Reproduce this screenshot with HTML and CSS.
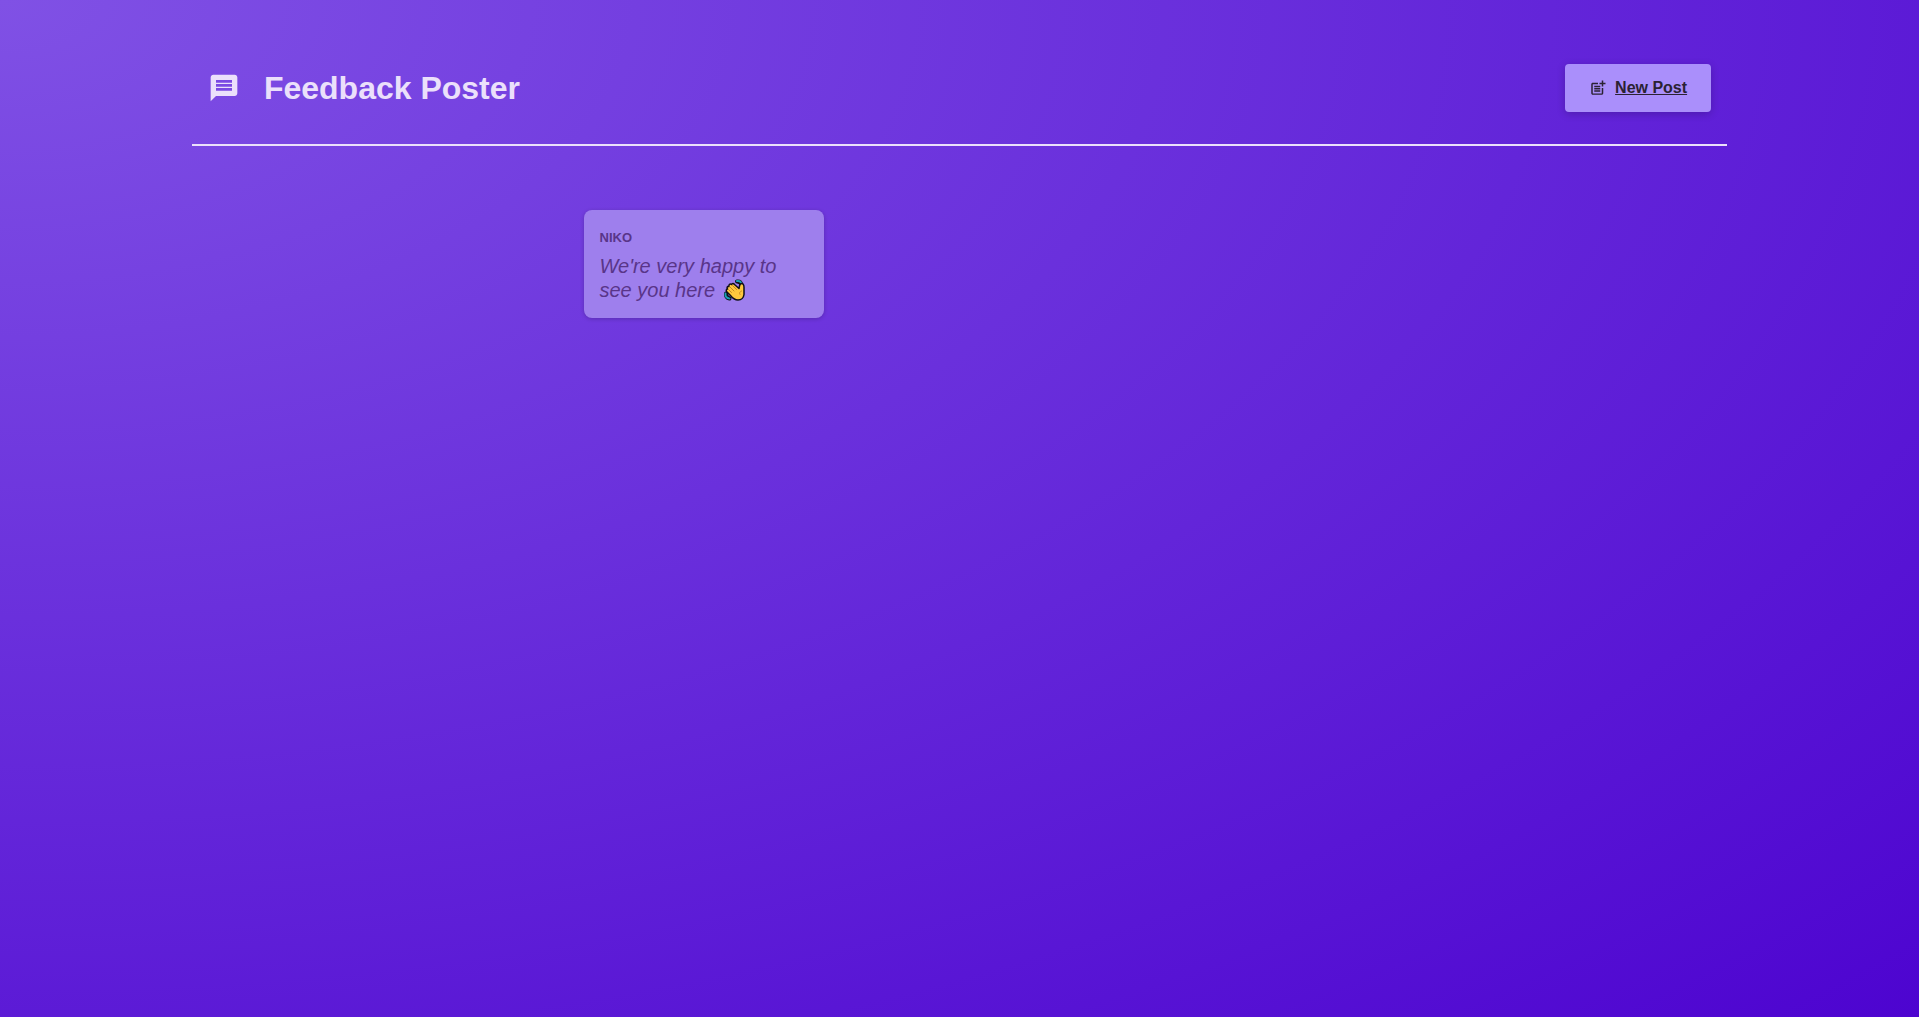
FILE: index.html
```html
<!DOCTYPE html>
<html lang="en">
<head>
<meta charset="utf-8">
<meta name="viewport" content="width=device-width, initial-scale=1">
<title>Feedback Poster</title>
<link rel="stylesheet" href="styles.css">
</head>
<body>
<header class="header">
  <h1 class="logo">
    <svg class="logo-icon" viewBox="0 0 24 24" aria-hidden="true"><path d="M20 2H4c-1.1 0-1.99.9-1.99 2L2 22l4-4h14c1.1 0 2-.9 2-2V4c0-1.1-.9-2-2-2zm-2 12H6v-2h12v2zm0-3H6V9h12v2zm0-3H6V6h12v2z"/></svg>
    Feedback Poster
  </h1>
  <a class="button" href="#new-post">
    <svg class="button-icon" viewBox="0 0 24 24" aria-hidden="true"><path d="M17 19.22H5V7h7V5H5c-1.1 0-2 .9-2 2v12c0 1.1.9 2 2 2h12c1.1 0 2-.9 2-2v-7h-2v7.22z"/><path d="M19 2h-2v3h-3c.01.01 0 2 0 2h3v2.99c.01.01 2 0 2 0V7h3V5h-3V2zM7 9h8v2H7zM7 12v2h8v-2H7zM7 15h8v2H7z"/></svg>
    <span class="button-label">New Post</span>
  </a>
</header>
<main>
  <ul class="posts">
    <li class="post">
      <p class="author">Niko</p>
      <p class="text">We're very happy to see you here <svg class="wave" viewBox="0 0 24 24" role="img" aria-label="waving hand">
        <g fill="none" stroke-linecap="round"><path d="M14 3.500c3-.5 4 1 4.500 3.500M3 15.500c-.5 2.500 1 4.500 3.500 5" stroke="#101018" stroke-width="4"/><path d="M14 3c3-.5 4.500 1 4.500 4M2.500 15.500c-.5 2.500 1 5 4 5" stroke="#199fb0" stroke-width="2"/><path d="M14 4.500q2.500 0 3 3M4.500 15.500q-.5 2.500 2 3.500" stroke="#101018" stroke-width="1"/></g>
        <path d="M4 14c-1.500-1.500-.5-3 .5-3-1-1.500 0-3 1.500-2.500-.5-2 1-3 2.500-2 .5-1.500 2-1.500 3 0l4.500 4c.5-2.500.5-5 2.500-5 2 0 2.500 1.500 2.500 4v7c-.5 3.500-3 5.500-6 5.500-3.500 0-6-2.500-8-5z" fill="#ffc83d" stroke="#101018" stroke-width="1.500" stroke-linejoin="round"/>
        <path d="M5.500 11.500l3 3M7 9l4 4M9.500 7.500l4 4M18.500 13c-2 1-2.500 2-1.500 3.500" fill="none" stroke="#c58a25" stroke-width="1" stroke-linecap="round"/>
      </svg></p>
    </li>
  </ul>
</main>
</body>
</html>
```
FILE: styles.css
```css
* {
  box-sizing: border-box;
}

body {
  margin: 0;
  min-height: 100vh;
  padding-top: 32px;
  font-family: "Liberation Sans", Arial, sans-serif;
  background: radial-gradient(ellipse at top left, #8051e5, #4d04d0);
  color: #2b2233;
}

.header {
  display: flex;
  justify-content: space-between;
  align-items: center;
  width: 80%;
  margin: 0 auto 64px;
  padding: 32px 16px;
  border-bottom: 2px solid #ebe0fb;
}

.logo {
  display: flex;
  align-items: center;
  gap: 24px;
  margin: 0;
  font-size: 32px;
  line-height: 36px;
  color: #ebe0fb;
}

.logo-icon {
  width: 32px;
  height: 32px;
  fill: currentColor;
}

.button {
  display: flex;
  align-items: center;
  gap: 8px;
  padding: 12px 24px;
  border-radius: 4px;
  background: #aa8ffb;
  box-shadow: 0 2px 8px rgba(0, 0, 0, 0.2);
  color: #2b2233;
  font-size: 16px;
  font-weight: bold;
  line-height: 24px;
  text-decoration: none;
}

.button-icon {
  width: 18px;
  height: 18px;
  fill: currentColor;
}

.button-label {
  text-decoration: underline;
}

.posts {
  display: grid;
  grid-template-columns: repeat(auto-fill, 240px);
  justify-content: center;
  gap: 16px;
  max-width: 800px;
  margin: 0 auto;
  padding: 0;
  list-style: none;
}

.post {
  padding: 20px 16px 16px;
  border-radius: 8px;
  background: #9e7fed;
  box-shadow: 0 1px 4px rgba(0, 0, 0, 0.2);
  color: #593589;
}

.author {
  margin: 0 0 8px;
  font-size: 13px;
  font-weight: bold;
  line-height: 16px;
  text-transform: uppercase;
}

.text {
  margin: 0;
  font-size: 20px;
  font-style: italic;
  line-height: 24px;
}

.wave {
  width: 24px;
  height: 24px;
  margin-left: 2px;
  vertical-align: bottom;
}
```
